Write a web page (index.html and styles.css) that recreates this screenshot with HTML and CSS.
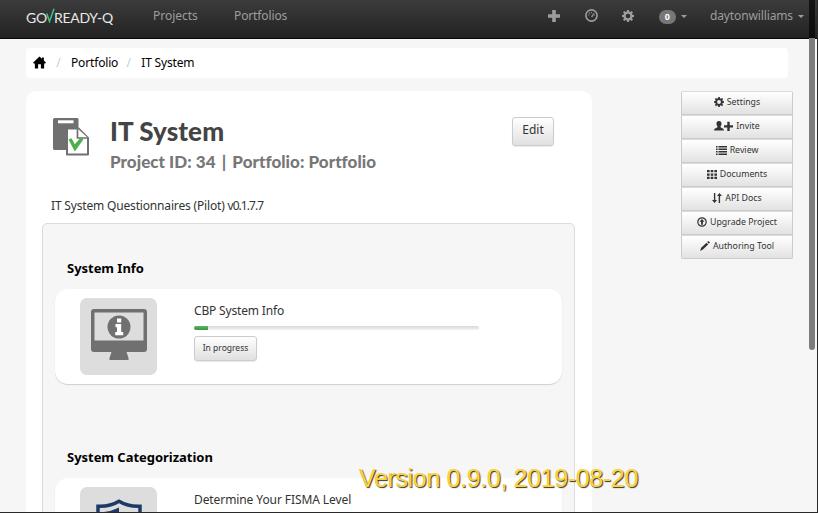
FILE: index.html
```html
<!DOCTYPE html>
<html lang="en">
<head>
<meta charset="utf-8">
<title>IT System - GovReady-Q</title>
<link rel="stylesheet" href="styles.css">
</head>
<body>
<svg width="0" height="0" class="defs">
  <symbol id="gear" viewBox="0 0 16 16"><path fill-rule="evenodd" d="M6.800 0h2.400l.4 2.100 1.400.6 1.900-1.300 1.700 1.700L13.300 5l.6 1.400 2.100.4v2.400l-2.100.4-.6 1.400 1.300 1.900-1.700 1.700-1.900-1.300-1.400.6-.4 2.100H6.800l-.4-2.100-1.400-.6-1.900 1.300-1.700-1.700L2.700 11l-.6-1.400L0 9.200V6.800l2.100-.4L2.700 5 1.400 3.100l1.700-1.700L5 2.700l1.400-.6zM8 4.900a3.100 3.100 0 1 0 0 6.200 3.100 3.100 0 0 0 0-6.200z"/></symbol>
  <symbol id="plus" viewBox="0 0 12 12"><path d="M4.200 0h3.600v4.200H12v3.600H7.800V12H4.200V7.800H0V4.200h4.200z"/></symbol>
</svg>
<div class="window">
  <header class="navbar">
    <a class="brand">GO<svg class="check" viewBox="0 0 9 15"><path d="M.8 5.500l2.700 8L8 .8"/></svg>READY-Q</a>
    <a class="nav-projects">Projects</a>
    <a class="nav-portfolios">Portfolios</a>
    <nav class="tools">
      <svg class="i-plus"><use href="#plus"/></svg>
      <svg class="i-dash" viewBox="0 0 13 13"><circle cx="6.500" cy="6.500" r="5.600" fill="none" stroke="currentColor" stroke-width="1.600"/><path d="M6 7.700l2.800-4 .6.400-2 4.200z"/><circle cx="3.700" cy="6" r=".6"/><circle cx="4.600" cy="4.200" r=".6"/><circle cx="6.500" cy="3.500" r=".6"/><circle cx="9.500" cy="6" r=".6"/></svg>
      <svg class="i-gear"><use href="#gear"/></svg>
      <span class="count">0</span><i class="caret"></i>
      <span class="user">daytonwilliams</span><i class="caret"></i>
    </nav>
  </header>
  <div class="breadcrumb">
    <svg class="home" viewBox="0 0 14 13"><path d="M7 0l2.700 2.500V1h2v3.400L14 6.700l-.9.900H12V13H8.500V8.500h-3V13H2V7.600H.9L0 6.700z"/></svg>
    <span class="sep">/</span><a class="crumb">Portfolio</a><span class="sep sep2">/</span><a class="crumb">IT System</a>
  </div>
  <div class="columns">
    <main class="panel">
      <div class="project">
        <svg class="project-icon" viewBox="0 0 36 38"><path fill="#707070" d="M1.500 0h22.800q1.200 0 1.200 1.200V10H15q-1 0-1 1v21H1.500Q0 32 0 30.500v-29Q0 0 1.500 0z"/><path fill="#fff" d="M5 2.300h15.500v3H5z"/><path fill="#fff" stroke="#707070" stroke-width="2" stroke-linejoin="round" d="M14 10.500h11.500L35 20v16.500H14z"/><path fill="#fff" stroke="#707070" stroke-width="1.700" d="M24.500 10.500V20H35"/><path fill="#4cae4c" d="M15.500 21.500l3-1.200 3.300 6 5.500-6.300 3.200 1.300-8.700 12.200z"/></svg>
        <div class="titles">
          <h1>IT System</h1>
          <h2>Project ID: 34 <span class="bar">|</span> Portfolio: Portfolio</h2>
        </div>
        <button class="btn edit">Edit</button>
      </div>
      <p class="version-line">IT System Questionnaires (Pilot) <span>v0.1.7.7</span></p>
      <section class="questions">
        <h3>System Info</h3>
        <article class="card">
          <div class="thumb"><svg viewBox="0 0 56 51"><path fill="#707070" fill-rule="evenodd" d="M3 0h50q3 0 3 3v37q0 3-3 3H35.500l2 6v2h-19v-2l2-6H3q-3 0-3-3V3q0-3 3-3zm.500 3.500v28h49v-28z"/><circle cx="28" cy="18" r="11.500" fill="#707070"/><path fill="#fff" d="M26 9.500h4.200v4H26zM24.500 15h5.700v8h2v3.300h-8V23H26v-4.700h-1.500z"/></svg></div>
          <div class="detail">
            <div class="task">CBP System Info</div>
            <div class="progress"><span></span></div>
            <button class="btn status">In progress</button>
          </div>
        </article>
        <h3 class="second">System Categorization</h3>
        <article class="card">
          <div class="thumb"><svg class="shield" viewBox="0 0 46 51"><path fill="none" stroke="#1c3a67" stroke-width="3.500" d="M2 8.300q12 .5 21-5 9 5.500 21 5v20Q43 42 23 49 3 42 2 28.300z"/><path fill="#1c3a67" d="M8 14q7-.5 15-4.500v34Q9 37 8 27z"/></svg></div>
          <div class="detail"><div class="task level">Determine Your FISMA Level</div></div>
        </article>
      </section>
    </main>
    <aside class="actions">
      <a class="action first"><svg width="10" height="10"><use href="#gear"/></svg>Settings</a>
      <a class="action"><svg width="19" height="10" viewBox="0 0 19 10"><path d="M5 0c2 0 2.800 1.300 2.500 3.200C7.300 4.500 6.500 5 6.500 6c0 1 3.500 1 3.500 3.500H0C0 7 3.500 7 3.500 6c0-1-.8-1.500-1-2.800C2.200 1.300 3 0 5 0zM13.300.8h2.400v3.400H19v2.400h-3.300V10h-2.400V6.600H10V4.200h3.300z"/></svg>Invite</a>
      <a class="action"><svg width="11" height="9" viewBox="0 0 11 9"><path d="M0 0h1.600v1.500H0zm2.500 0H11v1.500H2.500zM0 2.500h1.600V4H0zm2.500 0H11V4H2.500zM0 5h1.600v1.500H0zm2.500 0H11v1.500H2.500zM0 7.500h1.600V9H0zm2.500 0H11V9H2.500z"/></svg>Review</a>
      <a class="action"><svg width="10" height="9" viewBox="0 0 10 9"><path d="M0 0h2.600v2.300H0zm3.700 0h2.600v2.300H3.700zm3.700 0H10v2.300H7.400zM0 3.400h2.600v2.300H0zm3.700 0h2.600v2.300H3.700zm3.700 0H10v2.300H7.400zM0 6.700h2.600V9H0zm3.700 0h2.600V9H3.700zm3.700 0H10V9H7.400z"/></svg>Documents</a>
      <a class="action"><svg width="10" height="10" viewBox="0 0 10 10"><path d="M1.900 0h1.400v7H5L2.600 10 0 7h1.900zM6.700 10h1.400V3H10L7.400 0 5 3h1.700z"/></svg>API Docs</a>
      <a class="action"><svg width="10" height="10" viewBox="0 0 10 10"><circle cx="5" cy="5" r="4.200" fill="none" stroke="currentColor" stroke-width="1.200"/><path d="M5 1.900l2.500 2.900H5.900v2.900H4.100V4.800H2.500z"/></svg>Upgrade Project</a>
      <a class="action last"><svg width="10" height="10" viewBox="0 0 10 10"><path d="M8.300 0L10 1.600 8.900 2.700 7.200 1.100zM6.500 1.700l1.700 1.700-5.300 5L0 10l1.200-3.200z"/></svg>Authoring Tool</a>
    </aside>
  </div>
</div>
<div class="scrollbar"></div>
<div class="release">Version 0.9.0, 2019-08-20</div>
</body>
</html>
```

FILE: styles.css
```css
* { box-sizing: border-box; }
html, body { margin: 0; height: 100%; overflow: hidden; }
body { font-family: "Noto Sans", sans-serif; font-size: 12px; color: #333; background: #292929; }
svg { fill: currentColor; flex: none; }
.defs { position: absolute; }
.window { width: 817px; height: 512px; overflow: hidden; background: #f6f6f6; }
h1, h2, h3, p { margin: 0; }

.navbar { display: flex; align-items: center; height: 39px; padding: 0 13px 7px 26px; background: linear-gradient(#3c3c3c, #222); border-bottom: 1px solid #080808; color: #9d9d9d; white-space: nowrap; }
.brand { display: flex; align-items: center; width: 127px; color: #e8e8e8; font: 14px Lato, sans-serif; letter-spacing: -.25px; padding-top: 3px; }
.check { width: 9px; height: 15px; margin: -4px -1px 0 -1px; fill: none; stroke: #3fc380; stroke-width: 1.5; }
.nav-projects { width: 81px; letter-spacing: -.03px; }
.nav-portfolios { letter-spacing: -.12px; }
.tools { display: flex; align-items: center; margin-left: auto; }
.i-plus { width: 12px; height: 12px; margin-right: 25px; }
.i-dash { width: 13px; height: 13px; margin-right: 24px; }
.i-gear { width: 12px; height: 12px; margin-right: 25px; }
.count { width: 17px; height: 14px; border-radius: 7px; background: #777; color: #fff; font-size: 9px; font-weight: 700; line-height: 14px; text-align: center; margin-top: 2px; }
.caret { border: 3px solid transparent; border-top-color: currentColor; border-bottom: 0; margin: 2px 0 0 5px; }
.user { margin-left: 23px; letter-spacing: -.12px; }

.breadcrumb { display: flex; align-items: center; width: 762px; height: 30px; margin: 9px 0 0 26px; padding: 0 0 2px 7px; border-radius: 4px; background: #fff; color: #000; }
.home { width: 13px; height: 13px; }
.sep { color: #ccc; width: 9px; margin: 0 8px 0 8px; text-align: center; }
.sep2 { margin: 0 8px 0 6px; }
.crumb { letter-spacing: -.16px; }

.columns { display: flex; align-items: flex-start; justify-content: space-between; padding: 13px 24px 0 26px; }
.panel { width: 566px; height: 460px; padding: 0 17px 0 16px; border-radius: 10px; background: #fff; }
.project { display: flex; height: 107px; padding: 26px 21px 0 11px; }
.project-icon { width: 36px; height: 38px; margin-top: 1px; }
.titles { margin-left: 21px; flex: 1; font-family: Lato, sans-serif; white-space: nowrap; }
h1 { font-size: 26px; font-weight: 900; line-height: 30px; color: #444; letter-spacing: .1px; margin-top: -1px; }
h2 { font-size: 17px; font-weight: 900; line-height: 22px; color: #777; margin-top: 5px; letter-spacing: .04px; }
.bar { margin: 0 2px 0 2px; }
.btn { display: block; padding: 0; font-family: inherit; color: #333; border: 1px solid #ccc; border-radius: 3px; background: linear-gradient(#fff, #e0e0e0); box-shadow: 0 1px 1px rgba(0,0,0,.08); }
.edit { width: 42px; height: 29px; font-size: 12px; padding-bottom: 4px; }
.version-line { height: 24.500px; line-height: 16px; padding-left: 9px; letter-spacing: -.17px; }
.version-line span { letter-spacing: -.95px; }

.questions { height: 330px; padding: 34px 12px 0 12px; border: 1px solid #dcdcdc; border-radius: 5px; background: #f6f6f6; }
h3 { font-size: 13px; line-height: 20px; font-weight: 700; color: #000; letter-spacing: -.03px; padding-left: 12px; margin-bottom: 11px; }
.second { margin-top: 63px; }
.card { display: flex; height: 95px; padding: 9px 0 0 25px; border-radius: 13px; background: #fff; box-shadow: 0 1px 1px rgba(0,0,0,.16); }
.thumb { display: flex; justify-content: center; width: 77px; height: 77px; padding-top: 11px; border-radius: 7px; background: #ddd; }
.thumb svg { width: 56px; height: 51px; }
.thumb .shield { width: 46px; }
.detail { width: 285px; margin-left: 37px; padding-top: 5px; }
.task { line-height: 16px; white-space: nowrap; letter-spacing: -.17px; }
.level { letter-spacing: -.09px; }
.progress { height: 4px; margin-top: 7px; border-radius: 2px; background: linear-gradient(#d8d8d8, #f2f2f2); overflow: hidden; }
.progress span { display: block; width: 14px; height: 4px; background: linear-gradient(#5cb85c, #379447); }
.status { width: 63px; height: 25px; margin-top: 6px; font-size: 8.500px; padding-bottom: 2px; }

.actions { width: 112px; margin-right: 0; }
.action { display: flex; align-items: center; justify-content: center; gap: 3px; height: 24px; padding-bottom: 2px; border: 1px solid #ccc; border-top-color: #dadada; background: linear-gradient(#fff, #e2e2e2); font-size: 8.800px; white-space: nowrap; }
.first { border-radius: 2px 2px 0 0; }
.last { border-radius: 0 0 2px 2px; }

.scrollbar { position: absolute; left: 809px; top: 0; width: 6px; height: 350px; border-radius: 0 0 3px 3px; background: linear-gradient(rgba(0,0,0,.65) 38px, #7c7c7c 38px); }
.release { position: absolute; left: 359px; top: 463px; font: 25px/30px "Liberation Sans", Arial, sans-serif; color: #fbd334; letter-spacing: -.35px; text-shadow: 1px 1px 1px #333; white-space: nowrap; }
```
